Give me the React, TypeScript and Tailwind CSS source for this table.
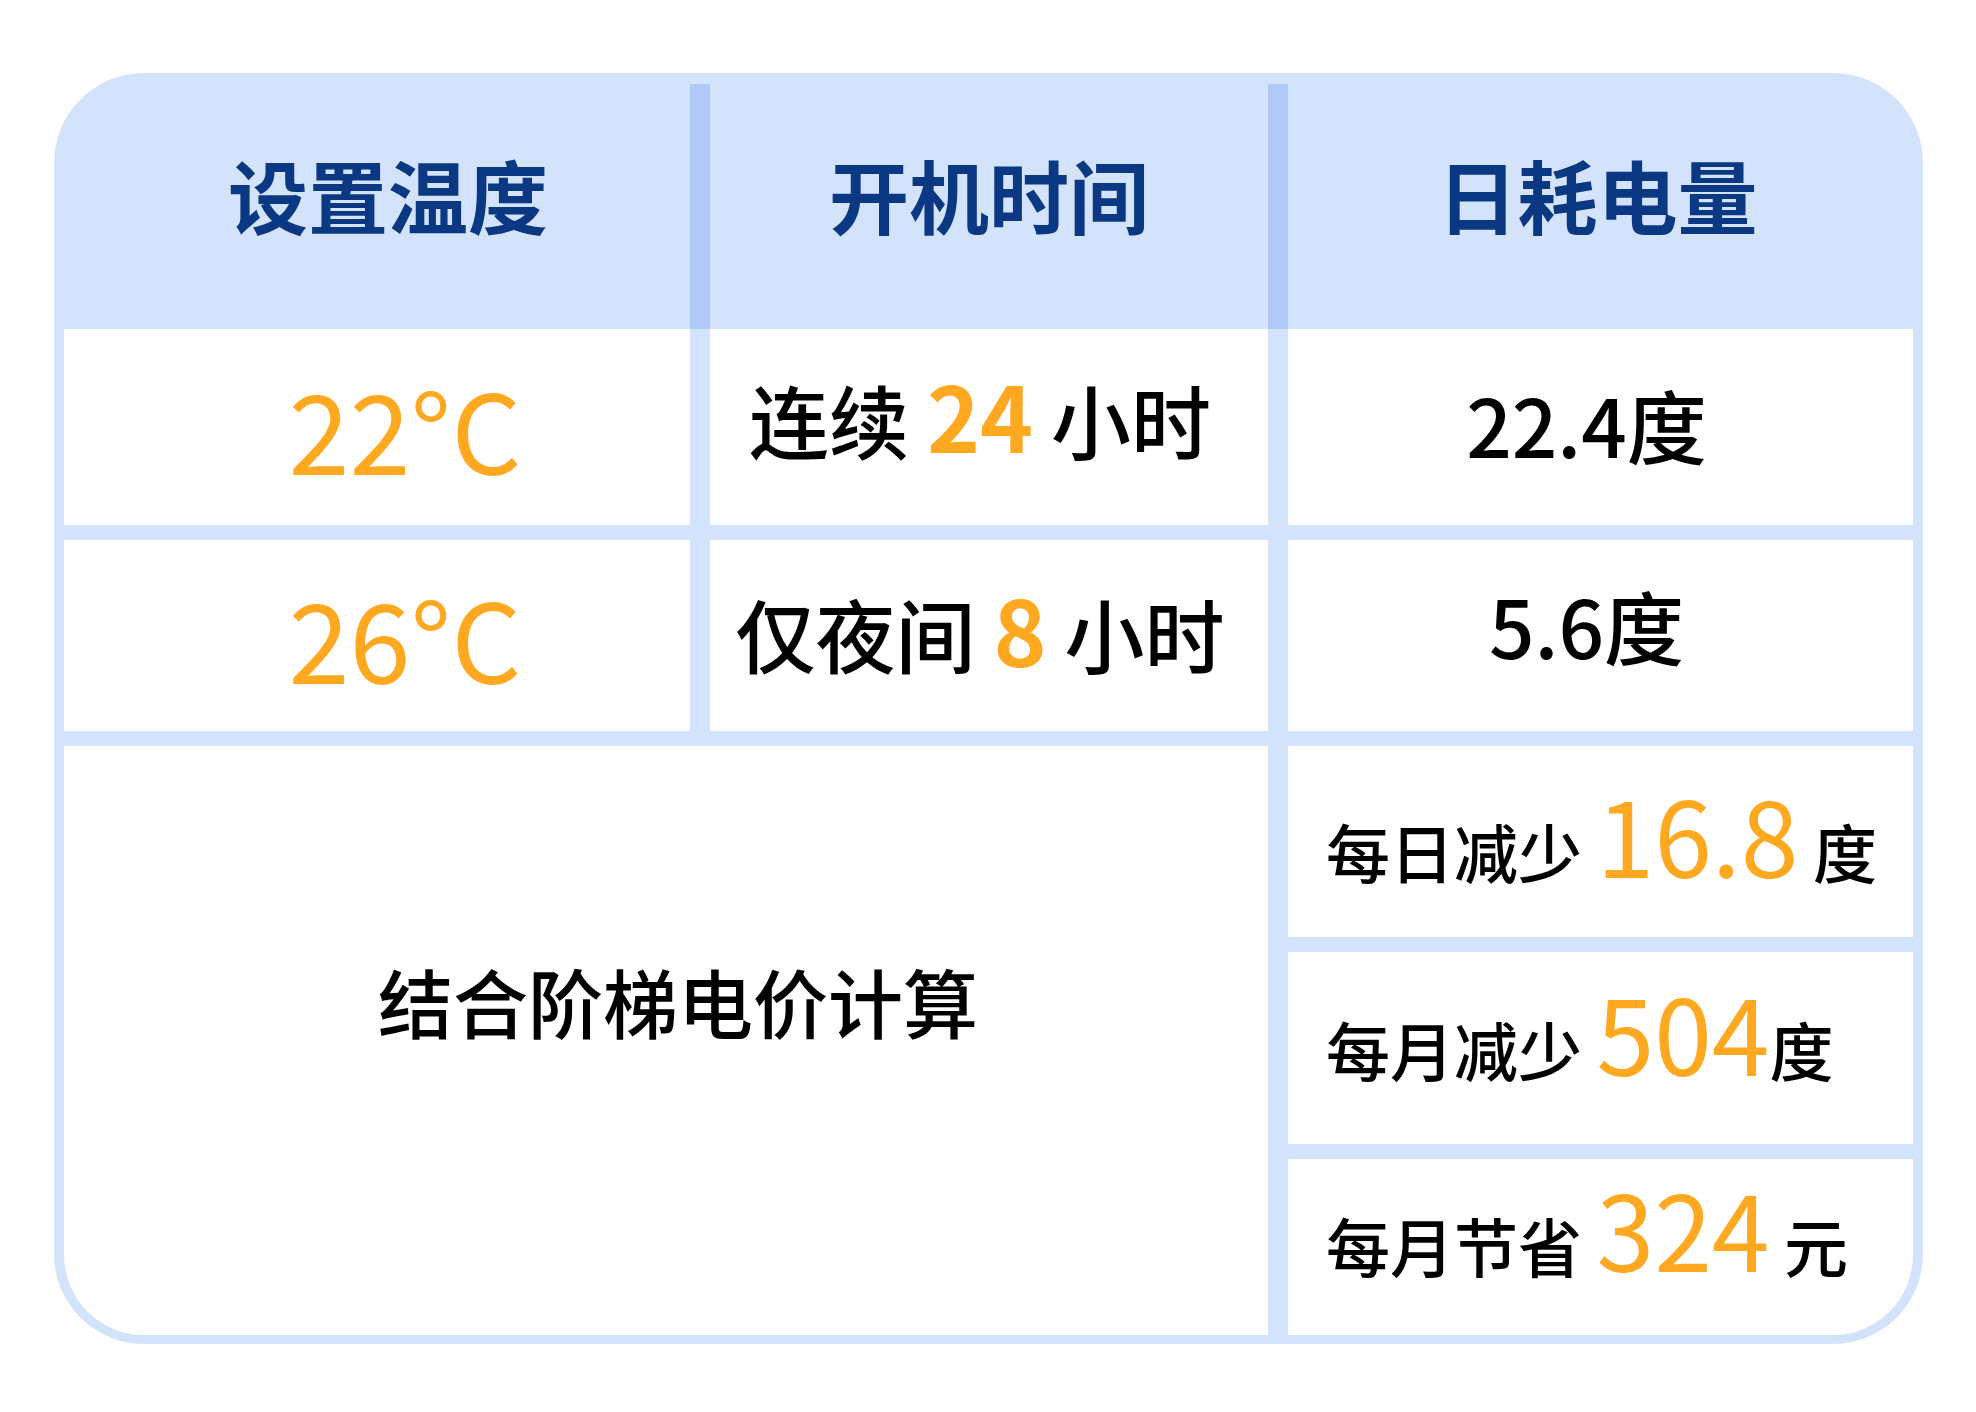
import React from "react";

const O = "text-[#ffa820]";

export default function App() {
  return (
    <div className="min-h-[1412px] w-[1976px] bg-white font-['Noto_Sans_CJK_SC',sans-serif] text-black">
      <div className="ml-[54px] pt-[73px]">
        <div className="w-[1869px] overflow-hidden rounded-[90px] bg-[#d4e3fc] px-[10px] pb-[9px] pt-[11px]">
          {/* header */}
          <div className="flex h-[245px]">
            <div className="flex w-[626px] items-center justify-center pb-[28px] pl-[22px] text-[80px] font-bold leading-none text-[#0b3882]">
              <div>设置温度</div>
            </div>
            <div className="w-[20px] bg-[#b0c9f9]" />
            <div className="flex w-[558px] items-center justify-center pb-[28px] text-[80px] font-bold leading-none text-[#0b3882]">
              <div>开机时间</div>
            </div>
            <div className="w-[20px] bg-[#b0c9f9]" />
            <div className="flex w-[625px] items-center justify-center pb-[28px] pr-[6px] text-[80px] font-bold leading-none text-[#0b3882]">
              <div>日耗电量</div>
            </div>
          </div>
          {/* body */}
          <div className="grid grid-cols-[626px_558px_625px] grid-rows-[196px_191px_191px_192px_176px] gap-x-[20px] gap-y-[15px] font-medium">
            <div className={`flex items-center justify-center bg-white pl-[56px] text-[110px] font-normal leading-none ${O}`}>
              <div>22°C</div>
            </div>
            <div className="flex items-center justify-center bg-white pb-[26px] pr-[18px] text-[80px] leading-none">
              <div className="whitespace-pre">
                连续 <span className={`text-[90px] font-bold ${O}`}>24</span> 小时
              </div>
            </div>
            <div className="flex items-center justify-center bg-white pb-[8px] pr-[28px] text-[80px] leading-none">
              <div>22.4度</div>
            </div>

            <div className={`flex items-center justify-center bg-white pl-[56px] text-[110px] font-normal leading-none ${O}`}>
              <div>26°C</div>
            </div>
            <div className="flex items-center justify-center bg-white pb-[16px] pr-[18px] text-[80px] leading-none">
              <div className="whitespace-pre">
                仅夜间 <span className={`text-[90px] font-bold ${O}`}>8</span> 小时
              </div>
            </div>
            <div className="flex items-center justify-center bg-white pb-[24px] pr-[28px] text-[80px] leading-none">
              <div>5.6度</div>
            </div>

            <div className="col-span-2 row-span-3 flex items-center justify-center rounded-bl-[80px] bg-white pb-[81px] pl-[24px] text-[75px] leading-none">
              <div>结合阶梯电价计算</div>
            </div>
            <div className="flex items-center bg-white pb-[18px] pl-[38px] text-[64px] leading-none">
              <div className="whitespace-pre">
                每日减少 <span className={`text-[104px] font-normal ${O}`}>16.8</span> 度
              </div>
            </div>
            <div className="flex items-center bg-white pb-[34px] pl-[38px] text-[64px] leading-none">
              <div className="whitespace-pre">
                每月减少 <span className={`text-[104px] font-normal ${O}`}>504</span>度
              </div>
            </div>
            <div className="flex items-center rounded-br-[80px] bg-white pb-[40px] pl-[38px] text-[64px] leading-none">
              <div className="whitespace-pre">
                每月节省 <span className={`text-[104px] font-normal ${O}`}>324</span> 元
              </div>
            </div>
          </div>
        </div>
      </div>
    </div>
  );
}
